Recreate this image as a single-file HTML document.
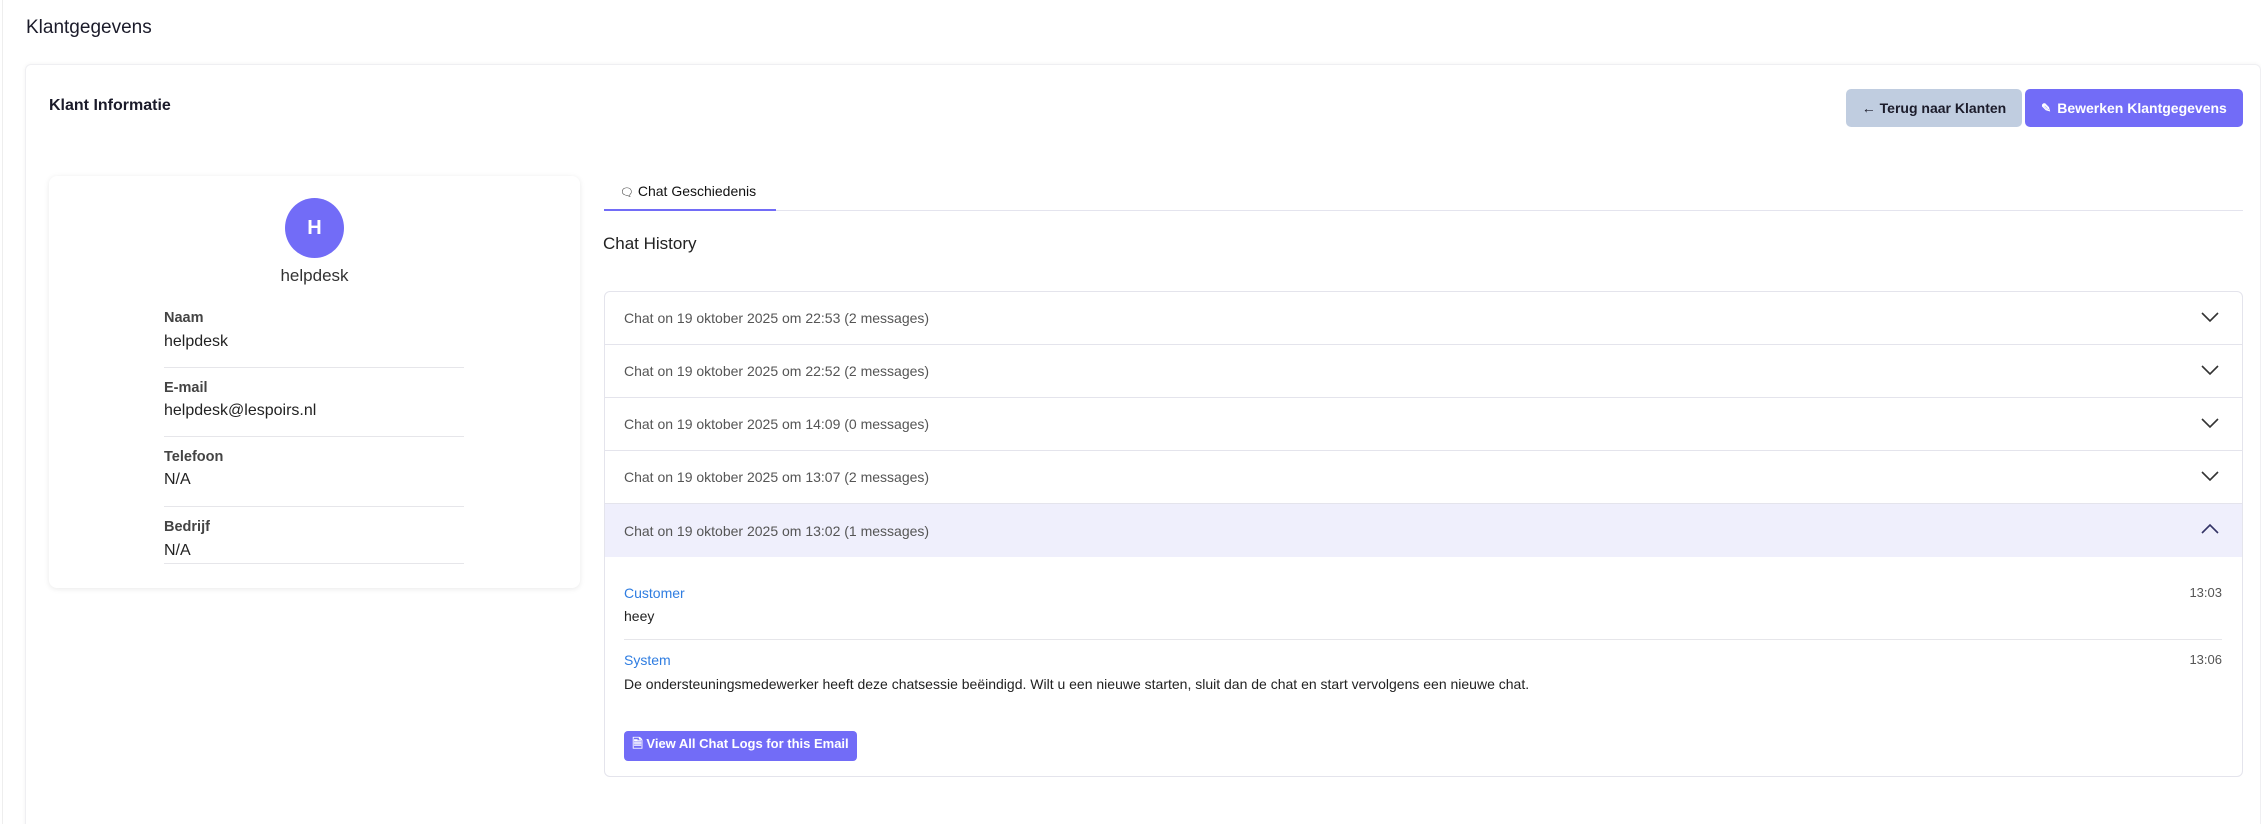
<!DOCTYPE html>
<html style="overflow:hidden;width:2261px;height:824px"><head><meta charset="utf-8"><style>
*{box-sizing:border-box;margin:0;padding:0}
body{width:2261px;height:824px;overflow:hidden;background:#fff;font-family:"Liberation Sans",sans-serif;color:#222;position:relative}
.abs{position:absolute}
.page-edge{left:2px;top:0;width:1px;height:824px;background:#eee}
.title{left:26px;top:17px;font-size:19px;font-weight:500;color:#1b1b2a}
.outer{left:25px;top:64px;width:2236px;height:780px;border:1px solid #efeff2;border-radius:6px;box-shadow:0 0 4px rgba(0,0,0,.05)}
.ki{left:49px;top:97px;font-size:16px;font-weight:600;color:#1b1b2a}
.btn{top:89px;height:38px;border-radius:5px;font-size:14px;font-weight:600;display:flex;align-items:center;justify-content:center}
.b1{left:1846px;width:176px;background:#c0cde0;color:#1b1b2a}
.b2{left:2025px;width:218px;background:#726cf7;color:#fff}
.lcard{left:49px;top:176px;width:531px;height:412px;border-radius:8px;box-shadow:0 1px 6px rgba(0,0,0,.09);background:#fff}
.av{left:285px;top:198px;width:59px;height:60px;border-radius:50%;background:#726cf7;color:#fff;font-weight:700;font-size:20px;display:flex;align-items:center;justify-content:center}
.name{left:0;width:629px;text-align:center;top:266px;font-size:17px;color:#333}
.lab{left:164px;font-size:14.5px;font-weight:700;color:#444}
.val{left:164px;font-size:16px;color:#222}
.sep{left:164px;width:300px;height:1px;background:#e6e6ea}
.tab{left:620px;top:183px;font-size:14px;color:#111}
.tabline{left:604px;top:210px;width:1639px;height:1px;background:#e4e4ee}
.tabul{left:604px;top:209px;width:172px;height:2px;background:#726cf7}
.ch{left:603px;top:234px;font-size:17px;color:#222}
.acc{left:604px;top:291px;width:1639px;height:486px;border:1px solid #e4e4ec;border-radius:6px;overflow:hidden}
.row{position:absolute;left:0;width:100%;height:53px;border-bottom:1px solid #e4e4ec;font-size:14px;color:#555;padding-left:19px;display:flex;align-items:center}
.row svg{position:absolute;right:23px;top:19px}
.who{left:624px;font-size:14px;color:#2f7de1}
.msg{left:624px;font-size:14px;color:#222}
.tm{right:39px;font-size:13px;color:#555}
.vb{left:624px;top:731px;width:233px;height:30px;background:#726cf7;border-radius:4px;color:#fff;font-size:13px;font-weight:600;display:flex;align-items:center;justify-content:center}
</style></head><body>
<div class="abs page-edge"></div>
<div class="abs title">Klantgegevens</div>
<div class="abs outer"></div>
<div class="abs ki">Klant Informatie</div>
<div class="abs btn b1">← Terug naar Klanten</div>
<div class="abs btn b2"><span style="font-size:12px;margin-right:6px">✎</span>Bewerken Klantgegevens</div>

<div class="abs lcard"></div>
<div class="abs av">H</div>
<div class="abs name">helpdesk</div>
<div class="abs lab" style="top:310px">Naam</div>
<div class="abs val" style="top:333px">helpdesk</div>
<div class="abs sep" style="top:367px"></div>
<div class="abs lab" style="top:380px">E-mail</div>
<div class="abs val" style="top:402px">helpdesk@lespoirs.nl</div>
<div class="abs sep" style="top:436px"></div>
<div class="abs lab" style="top:449px">Telefoon</div>
<div class="abs val" style="top:471px">N/A</div>
<div class="abs sep" style="top:506px"></div>
<div class="abs lab" style="top:519px">Bedrijf</div>
<div class="abs val" style="top:542px">N/A</div>
<div class="abs sep" style="top:563px"></div>

<div class="abs tab"><span style="font-size:11px">🗨</span> Chat Geschiedenis</div>
<div class="abs tabline"></div>
<div class="abs tabul"></div>
<div class="abs ch">Chat History</div>

<div class="abs acc">
<div class="row" style="top:0">Chat on 19 oktober 2025 om 22:53 (2 messages)<svg width="18" height="12" viewBox="0 0 18 12"><path d="M1 2l8 8 8-8" fill="none" stroke="#333" stroke-width="1.6"/></svg></div>
<div class="row" style="top:53px">Chat on 19 oktober 2025 om 22:52 (2 messages)<svg width="18" height="12" viewBox="0 0 18 12"><path d="M1 2l8 8 8-8" fill="none" stroke="#333" stroke-width="1.6"/></svg></div>
<div class="row" style="top:106px">Chat on 19 oktober 2025 om 14:09 (0 messages)<svg width="18" height="12" viewBox="0 0 18 12"><path d="M1 2l8 8 8-8" fill="none" stroke="#333" stroke-width="1.6"/></svg></div>
<div class="row" style="top:159px">Chat on 19 oktober 2025 om 13:07 (2 messages)<svg width="18" height="12" viewBox="0 0 18 12"><path d="M1 2l8 8 8-8" fill="none" stroke="#333" stroke-width="1.6"/></svg></div>
<div class="row" style="top:212px;background:#efeffc;border-bottom:none">Chat on 19 oktober 2025 om 13:02 (1 messages)<svg width="18" height="12" viewBox="0 0 18 12"><path d="M1 10l8-8 8 8" fill="none" stroke="#333366" stroke-width="1.6"/></svg></div>
</div>
<div class="abs who" style="top:585px">Customer</div>
<div class="abs tm" style="top:585px">13:03</div>
<div class="abs msg" style="top:608px">heey</div>
<div class="abs" style="left:624px;top:639px;width:1598px;height:1px;background:#e6e6ea"></div>
<div class="abs who" style="top:652px">System</div>
<div class="abs tm" style="top:652px">13:06</div>
<div class="abs msg" style="top:676px">De ondersteuningsmedewerker heeft deze chatsessie beëindigd. Wilt u een nieuwe starten, sluit dan de chat en start vervolgens een nieuwe chat.</div>
<div class="abs vb">🗎 View All Chat Logs for this Email</div>
</body></html>
